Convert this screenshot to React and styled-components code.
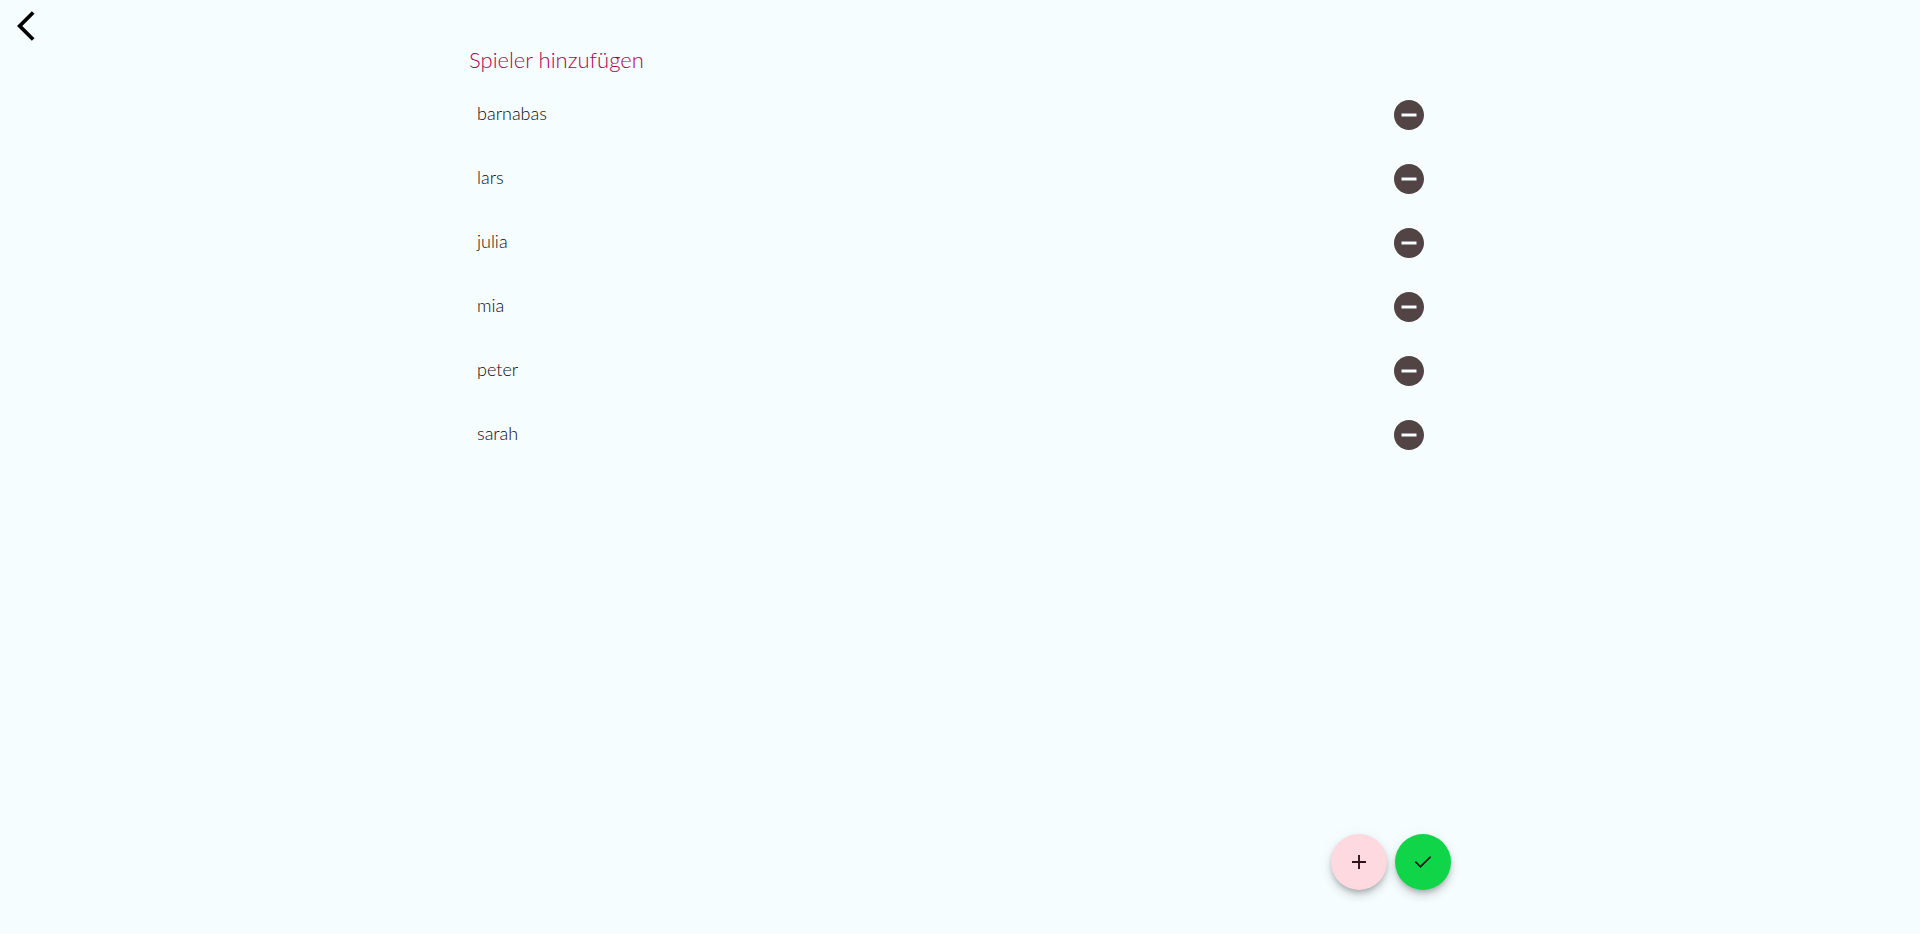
import React, { useState } from "react";
import styled, { createGlobalStyle } from "styled-components";
import { MdRemoveCircle, MdArrowBackIos } from "react-icons/md";

const GlobalStyle = createGlobalStyle`
  * { box-sizing: border-box; }
  body {
    margin: 0;
    background: #f5fdff;
    color: #100a0b;
    font-family: Lato, "Open Sans", sans-serif;
  }
`;

const Page = styled.div`
  min-height: 100vh;
  display: flex;
  flex-direction: column;
`;

const TopBar = styled.header`
  height: 48px;
  padding: 8px 17px;
`;

const IconButton = styled.button`
  display: flex;
  align-items: center;
  justify-content: center;
  padding: 0;
  border: 0;
  background: none;
  color: ${(p) => p.$color};
  font-size: 36px;
  cursor: pointer;
`;

const Content = styled.main`
  flex: 1;
  display: flex;
  flex-direction: column;
  width: 100%;
  max-width: 982px;
  margin: 0 auto;
`;

const Title = styled.h1`
  margin: 0;
  font-size: 22px;
  line-height: 24px;
  font-weight: 300;
  color: #b4004e;
`;

const PlayerList = styled.ul`
  flex: 1;
  margin: 11px 0 0;
  padding: 0;
  list-style: none;
`;

const PlayerRow = styled.li`
  display: flex;
  align-items: center;
  justify-content: space-between;
  height: 64px;
  padding: 0 24px 0 8px;
`;

const PlayerName = styled.span`
  font-size: 18px;
  line-height: 24px;
  font-weight: 300;
  padding-bottom: 4px;
`;

const Actions = styled.footer`
  position: sticky;
  bottom: 0;
  display: flex;
  justify-content: flex-end;
  gap: 8px;
  padding-bottom: 44px;
`;

const Fab = styled.button`
  display: flex;
  align-items: center;
  justify-content: center;
  width: 56px;
  height: 56px;
  padding: 0;
  border: 0;
  border-radius: 50%;
  background: ${(p) => p.$background};
  color: #31111d;
  cursor: pointer;
  box-shadow:
    0 3px 5px -1px rgba(0, 0, 0, 0.2),
    0 6px 10px rgba(0, 0, 0, 0.14),
    0 1px 18px rgba(0, 0, 0, 0.04);
`;

const Symbol = ({ d }) => (
  <svg width="24" height="24" viewBox="0 -960 960 960" fill="currentColor" aria-hidden="true">
    <path d={d} />
  </svg>
);

const ADD = "M442-442H200v-76h242v-242h76v242h242v76H518v242h-76v-242Z";
const CHECK = "M378-242 150-470l48-48 180 180 384-384 48 48-432 432Z";

export default function App() {
  const [players, setPlayers] = useState(["barnabas", "lars", "julia", "mia", "peter", "sarah"]);
  const remove = (name) => setPlayers(players.filter((p) => p !== name));

  return (
    <Page>
      <GlobalStyle />
      <TopBar>
        <IconButton type="button" aria-label="Zurück" $color="#000">
          <MdArrowBackIos />
        </IconButton>
      </TopBar>
      <Content>
        <Title>Spieler hinzufügen</Title>
        <PlayerList>
          {players.map((name) => (
            <PlayerRow key={name}>
              <PlayerName>{name}</PlayerName>
              <IconButton
                type="button"
                aria-label={`${name} entfernen`}
                $color="#524345"
                onClick={() => remove(name)}
              >
                <MdRemoveCircle />
              </IconButton>
            </PlayerRow>
          ))}
        </PlayerList>
        <Actions>
          <Fab type="button" aria-label="Spieler hinzufügen" $background="#ffd9e0">
            <Symbol d={ADD} />
          </Fab>
          <Fab type="button" aria-label="Fertig" $background="#10d548">
            <Symbol d={CHECK} />
          </Fab>
        </Actions>
      </Content>
    </Page>
  );
}
